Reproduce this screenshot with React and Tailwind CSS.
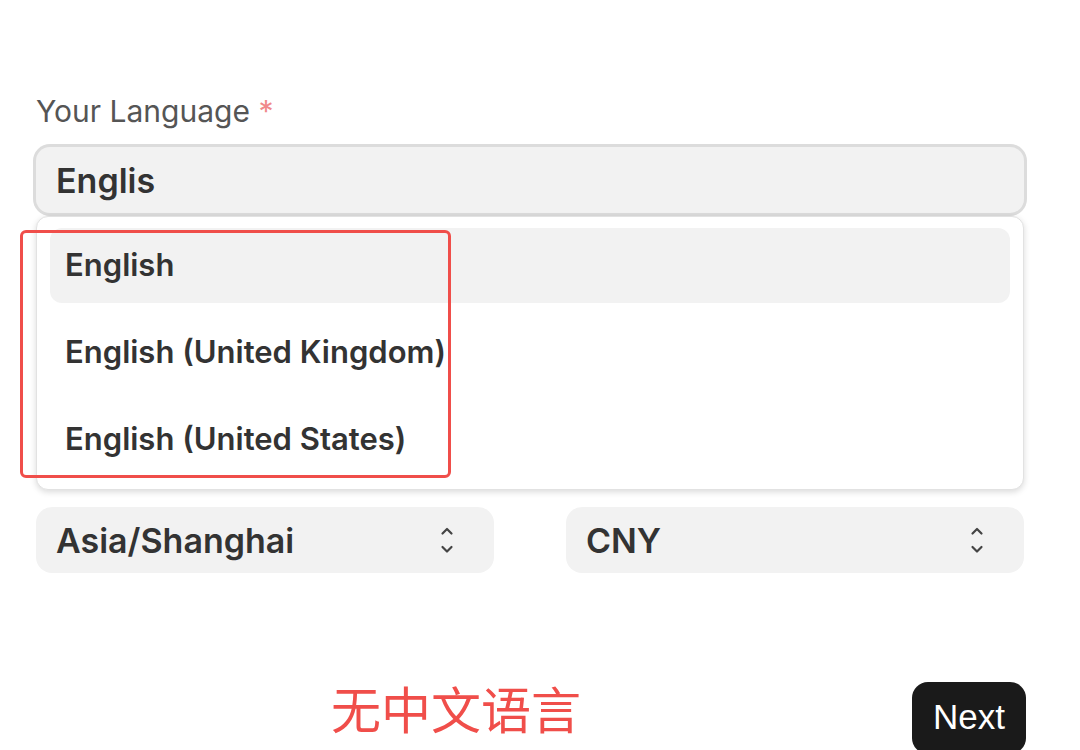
import React from 'react';

const options = ['English', 'English (United Kingdom)', 'English (United States)'];

// small up/down caret used on the select boxes
const UpDown = () => (
  <svg width="14" height="28" viewBox="0 0 14 28" fill="none" stroke="#444" strokeWidth="2.2" strokeLinecap="round" strokeLinejoin="round">
    <polyline points="2.5,7.5 7,3 11.5,7.5" />
    <polyline points="2.5,21 7,25.5 11.5,21" />
  </svg>
);

const Select = ({ value }) => (
  <div className="h-[66px] rounded-[16px] bg-[#f2f2f2] flex items-center justify-between pl-5 pr-10">
    <span className="text-[34px] font-semibold text-[#333]">{value}</span>
    <UpDown />
  </div>
);

const App = () => {
  return (
    <div className="w-[1080px] h-[750px] bg-white overflow-hidden font-['Inter',sans-serif]">
      <div className="w-[988px] ml-[36px] pt-[93px]">
        {/* Language field */}
        <label className="block text-[30px] leading-[36px] text-[#555]">
          Your Language <span className="text-[#f08a8a]">*</span>
        </label>

        <div className="relative mt-[18px]">
          <div className="h-[66px] rounded-[14px] bg-[#f2f2f2] ring-[3px] ring-[#dcdcdc] flex items-center pl-5">
            <span className="text-[34px] font-semibold text-[#333]">Englis</span>
          </div>

          {/* dropdown list */}
          <div className="absolute left-0 right-0 top-[69px] z-10 bg-white rounded-[12px] border border-[#e2e2e2] shadow-[0_2px_6px_rgba(0,0,0,0.15)] px-[13px] pt-[11px] pb-[12px] flex flex-col gap-[12px]">
            {options.map((o, i) => (
              <div
                key={o}
                className={
                  'h-[75px] rounded-[12px] flex items-center pl-[15px] text-[31px] font-semibold text-[#333] ' +
                  (i === 0 ? 'bg-[#f2f2f2]' : '')
                }
              >
                {o}
              </div>
            ))}
          </div>

          {/* annotation box */}
          <div className="absolute left-[-16px] top-[83px] w-[431px] h-[248px] z-20 border-[3px] border-[#f04e4a] rounded-[6px]" />
        </div>

        {/* time zone / currency */}
        <div className="grid grid-cols-2 gap-[72px] mt-[294px]">
          <Select value="Asia/Shanghai" />
          <Select value="CNY" />
        </div>

        {/* footer */}
        <div className="relative mt-[109px] h-[70px]">
          <span className="absolute left-[295px] top-[-5px] text-[50px] leading-[60px] text-[#f04e4a] font-['Noto_Sans_CJK_SC',sans-serif]">
            无中文语言
          </span>
          <button className="absolute right-[-2px] top-0 w-[114px] h-[72px] rounded-[16px] bg-[#1a1a1a] text-white text-[35px] font-['Liberation_Sans',sans-serif] flex items-center justify-center pb-[2px]">
            Next
          </button>
        </div>
      </div>
    </div>
  );
};

export default App;
